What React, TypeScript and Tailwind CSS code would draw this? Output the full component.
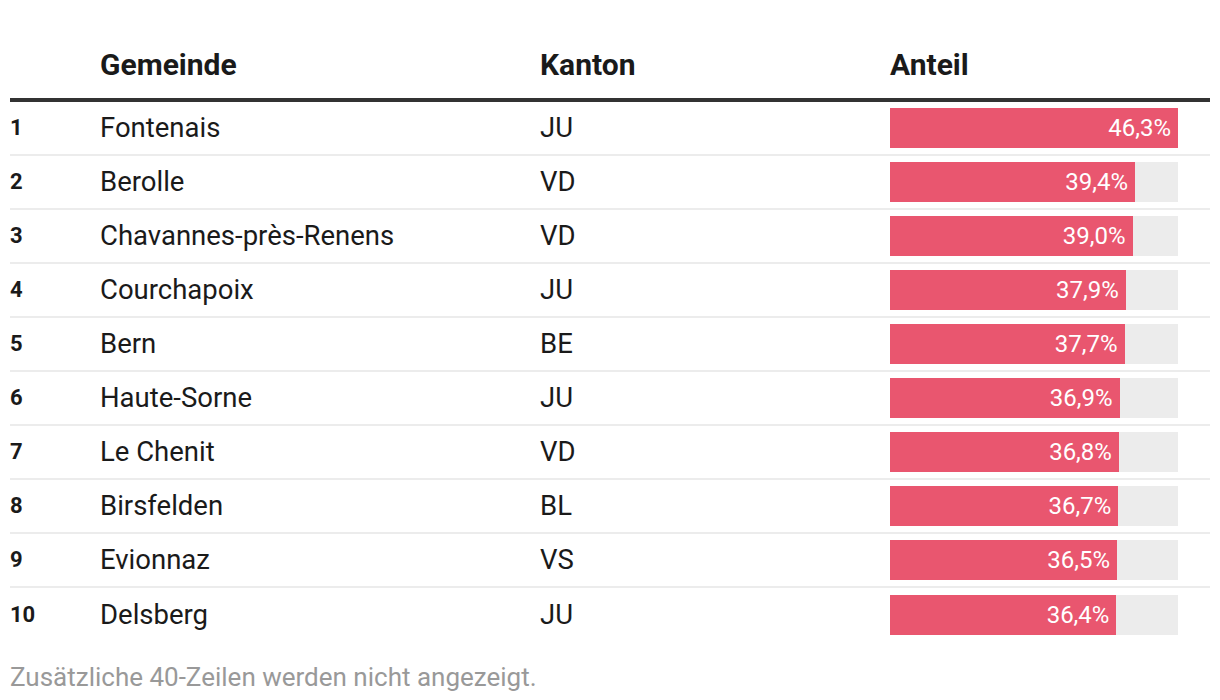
const rows = [
  { rank: 1, name: "Fontenais", kanton: "JU", value: 46.3 },
  { rank: 2, name: "Berolle", kanton: "VD", value: 39.4 },
  { rank: 3, name: "Chavannes-près-Renens", kanton: "VD", value: 39.0 },
  { rank: 4, name: "Courchapoix", kanton: "JU", value: 37.9 },
  { rank: 5, name: "Bern", kanton: "BE", value: 37.7 },
  { rank: 6, name: "Haute-Sorne", kanton: "JU", value: 36.9 },
  { rank: 7, name: "Le Chenit", kanton: "VD", value: 36.8 },
  { rank: 8, name: "Birsfelden", kanton: "BL", value: 36.7 },
  { rank: 9, name: "Evionnaz", kanton: "VS", value: 36.5 },
  { rank: 10, name: "Delsberg", kanton: "JU", value: 36.4 },
];

const MAX = 46.3;

export default function App() {
  return (
    <div className="bg-white w-[1220px] h-[700px] px-[10px] font-['Roboto',sans-serif] text-[#1a1a1a]">
      {/* header */}
      <div className="grid grid-cols-[90px_440px_350px_1fr] h-[102px] items-end pb-[15px] border-b-[4px] border-[#333] text-[30px] leading-[36px] font-bold">
        <div />
        <div>Gemeinde</div>
        <div>Kanton</div>
        <div>Anteil</div>
      </div>

      {rows.map((r, i) => (
        <div
          key={r.rank}
          className={`grid grid-cols-[90px_440px_350px_1fr] h-[54px] items-center ${
            i < rows.length - 1 ? "border-b-2 border-[#ececec]" : ""
          } leading-[32px]`}
        >
          <div className="text-[22px] font-bold">{r.rank}</div>
          <div className="text-[27.5px]">{r.name}</div>
          <div className="text-[27.5px]">{r.kanton}</div>
          <div className="w-[288px] h-[40px] bg-[#ececec] flex">
            <div
              className="h-full bg-[#e9566f] flex items-center justify-end pr-[7px] text-white text-[24px]"
              style={{ width: `${(r.value / MAX) * 100}%` }}
            >
              {r.value.toFixed(1).replace(".", ",")}%
            </div>
          </div>
        </div>
      ))}

      <div className="mt-[20px] text-[26px] leading-[30px] text-[#999]">
        Zusätzliche 40-Zeilen werden nicht angezeigt.
      </div>
    </div>
  );
}
